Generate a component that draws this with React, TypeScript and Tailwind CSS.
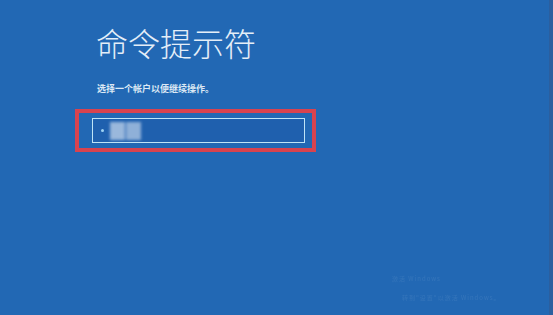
import React from 'react';

const cjk = { fontFamily: '"Noto Sans CJK SC", "Noto Sans", sans-serif' };

const App: React.FC = () => {
  return (
    <div className="relative w-[553px] h-[315px] overflow-hidden bg-[#2268b4] flex" style={cjk}>
      <div className="flex flex-col pl-[75px] pt-[22px]">
        <h1 className="ml-[21px] text-[32px] leading-[40px] font-light text-[#e4eef8]">命令提示符</h1>
        <p className="ml-[22px] mt-[21px] text-[9px] leading-[12px] font-bold text-[#dce8f5]">选择一个帐户以便继续操作。</p>
        <div className="mt-[14px] w-[241px] h-[43px] border-[4px] border-[#d8434f] flex items-center pl-[13px]">
          <div className="w-[213px] h-[25px] border-[1.5px] border-[#bfe4f7] bg-[#1f60ae] flex items-center pl-[8px] gap-[6px]">
            <span className="w-[3px] h-[3px] rounded-full bg-[#9fd3f3]" />
            <div className="flex gap-[1px] blur-[1.5px]">
              <span className="w-[15px] h-[18px] bg-[#9ab8dc]" />
              <span className="w-[15px] h-[18px] bg-[#8fb0d8]" />
            </div>
          </div>
        </div>
      </div>
      <div className="absolute right-0 top-0 w-[4px] h-full bg-[#2b5f9f]" />
      <div className="absolute left-[392px] top-[275px] w-[145px] flex flex-col gap-[12px] opacity-[0.08] text-white text-[6px] leading-[7px] whitespace-nowrap overflow-hidden">
        <span className="tracking-[1px]">激活 Windows</span>
        <span className="pl-[10px] tracking-[1px]">转到"设置"以激活 Windows。</span>
      </div>
    </div>
  );
};

export default App;
